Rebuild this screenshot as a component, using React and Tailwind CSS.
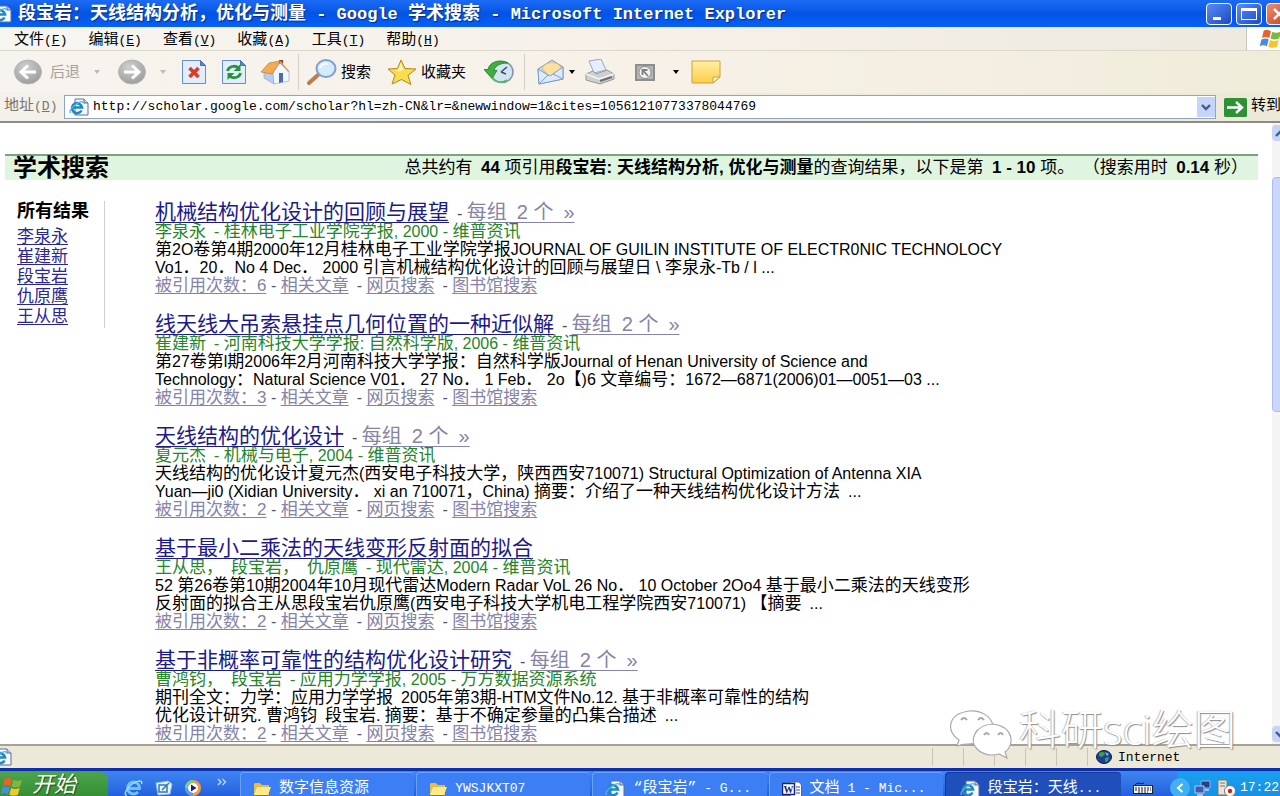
const results = [
  {
    title: "机械结构优化设计的回顾与展望",
    group: true,
    source: "李泉永\u2002- 桂林电子工业学院学报, 2000 - 维普资讯",
    lines: [
      "第2O卷第4期2000年12月桂林电子工业学院学报JOURNAL OF GUILIN INSTITUTE OF ELECTR0NIC TECHNOLOCY",
      "Vo1．20．No 4 Dec． 2000 引言机械结构优化设计的回顾与展望日 \\ 李泉永-Tb / l ...",
    ],
    cited: 6,
  },
  {
    title: "线天线大吊索悬挂点几何位置的一种近似解",
    group: true,
    source: "崔建新\u2002- 河南科技大学学报: 自然科学版, 2006 - 维普资讯",
    lines: [
      "第27卷第l期2006年2月河南科技大学学报：自然科学版Journal of Henan University of Science and",
      "Technology：Natural Science V01． 27 No． 1 Feb． 2o【)6 文章编号：1672—6871(2006)01—0051—03 ...",
    ],
    cited: 3,
  },
  {
    title: "天线结构的优化设计",
    group: true,
    source: "夏元杰\u2002- 机械与电子, 2004 - 维普资讯",
    lines: [
      "天线结构的优化设计夏元杰(西安电子科技大学，陕西西安710071) Structural Optimization of Antenna XIA",
      "Yuan—ji0 (Xidian University． xi an 710071，China) 摘要：介绍了一种天线结构优化设计方法\u2002...",
    ],
    cited: 2,
  },
  {
    title: "基于最小二乘法的天线变形反射面的拟合",
    group: false,
    source: "王从思，\u2002段宝岩，\u2002仇原鹰\u2002- 现代雷达, 2004 - 维普资讯",
    lines: [
      "52 第26卷第10期2004年10月现代雷达Modern Radar VoL 26 No． 10 October 2Oo4 基于最小二乘法的天线变形",
      "反射面的拟合王从思段宝岩仇原鹰(西安电子科技大学机电工程学院西安710071) 【摘要\u2002...",
    ],
    cited: 2,
  },
  {
    title: "基于非概率可靠性的结构优化设计研究",
    group: true,
    source: "曹鸿钧，\u2002段宝岩\u2002- 应用力学学报, 2005 - 万方数据资源系统",
    lines: [
      "期刊全文：力学：应用力学学报\u20022005年第3期-HTM文件No.12. 基于非概率可靠性的结构",
      "优化设计研究. 曹鸿钧\u2002段宝岩. 摘要：基于不确定参量的凸集合描述\u2002...",
    ],
    cited: 2,
  },
];

const authors = ["李泉永", "崔建新", "段宝岩", "仇原鹰", "王从思"];

const menus = [
  ["文件", "F"],
  ["编辑", "E"],
  ["查看", "V"],
  ["收藏", "A"],
  ["工具", "T"],
  ["帮助", "H"],
];

// Latin runs are set one size below the Chinese text around them
const Mixed = ({ text }) =>
  text.split(/([\x20-\x7e\u2002—]+)/).map((part, i) =>
    i % 2 ? <span key={i} className="text-base leading-none">{part}</span> : part
  );

/* ---------- icons ---------- */

const IePage = ({ className }) => (
  <svg viewBox="0 0 20 18" className={className} aria-hidden="true">
    <path d="M6 1h9l4 4v12H6z" fill="#f4f8ff" stroke="#5a6f9c" />
    <path d="M15 1v4h4" fill="#bcd0f2" stroke="#5a6f9c" />
    <path d="M12.500 12.500A5 5 0 1 1 13 9.500H4" fill="none" stroke="#2288c4" strokeWidth="2.600" />
    <path d="M2 14C-1 16 2 9 8 5.500C12 3 15 3 14 5.500" fill="none" stroke="#5ab4e0" strokeWidth="1.200" />
  </svg>
);

const IeLogo = ({ className }) => (
  <svg viewBox="0 0 20 18" className={className} aria-hidden="true">
    <path d="M14 13A6 6 0 1 1 15.500 9.500H5" fill="none" stroke="#6cc4fa" strokeWidth="2.800" />
    <path d="M3 16C-1 17 2 9 9 4.500C14 1 19 1 17.500 5" fill="none" stroke="#a5def9" strokeWidth="1.400" />
  </svg>
);

const WindowsFlag = ({ className }) => (
  <svg viewBox="0 0 26 22" className={className} aria-hidden="true">
    <path d="M5 2C8 0 10 1 13 2.500L11 10C8 8.500 6 8.500 3 10z" fill="#e8622c" />
    <path d="M14.500 3C17 4.500 20 4.500 24 3L22 10.500C18 12 15.500 12 12.500 10.500z" fill="#7cb93c" />
    <path d="M2.500 11.500C6 10 8 10 10.500 11.500L8.500 19C6 17.500 3 17.500 .5 19z" fill="#4a8ddd" />
    <path d="M12 12C15 13.500 18 13.500 21.500 12L19.500 19.500C16 21 13 21 10 19.500z" fill="#f5c62c" />
  </svg>
);

const RoundArrow = ({ flip }) => (
  <svg viewBox="0 0 28 26" className="h-[26px] w-7" aria-hidden="true">
    <defs>
      <radialGradient id="grayBall" cx=".4" cy=".3" r=".8">
        <stop offset="0" stopColor="#d0d0d0" />
        <stop offset="1" stopColor="#979797" />
      </radialGradient>
    </defs>
    <ellipse cx="14" cy="13" rx="13.500" ry="12" fill="url(#grayBall)" stroke="#b4b4b4" />
    <path
      d={flip ? "M6 13h14M14 6.500l7 6.500l-7 6.500" : "M22 13H8M14 6.500L7 13l7 6.500"}
      fill="none"
      stroke="#fff"
      strokeWidth="3"
    />
  </svg>
);

const Sheet = ({ children }) => (
  <svg viewBox="0 0 24 24" className="h-6 w-6" aria-hidden="true">
    <path d="M.5.5h18l5 5v18H.5z" fill="#e2edff" stroke="#6a8cc8" />
    <path d="M18.500.5v5h5z" fill="#5f84c8" stroke="#4a70b4" />
    {children}
  </svg>
);

const Home = () => (
  <svg viewBox="0 0 30 26" className="h-[26px] w-[30px]" aria-hidden="true">
    <path d="M19 1h4v7h-4z" fill="#9c3a22" />
    <path d="M4 13l10 1v11L4 19z" fill="#b9cdec" stroke="#8aa0c8" strokeWidth=".6" />
    <path d="M13 14l7-10l9 9v9l-15 3z" fill="#f3f7ff" stroke="#8aa0c8" strokeWidth=".6" />
    <path d="M1 13L9 4l11-2L12 15z" fill="#f5ab50" stroke="#c87830" strokeWidth=".7" />
    <path d="M20 2.500l9 10.500" stroke="#d9a06c" strokeWidth="1.600" />
    <path d="M19 14h4v9l-4 1z" fill="#4c6cb0" />
  </svg>
);

const Magnifier = () => (
  <svg viewBox="0 0 30 26" className="h-[26px] w-[30px]" aria-hidden="true">
    <path d="M2 24l9-8" stroke="#c07a50" strokeWidth="4" strokeLinecap="round" />
    <ellipse cx="19" cy="9.500" rx="9.500" ry="8.500" fill="#d3ecfa" stroke="#7f9fce" strokeWidth="2" />
    <path d="M13 9c1-4 5-5 8-4" stroke="#fff" strokeWidth="2" fill="none" />
  </svg>
);

const Star = () => (
  <svg viewBox="0 0 30 26" className="h-[26px] w-[30px]" aria-hidden="true">
    <path d="M14 1l4 8.500l11 .5l-8 6.500l3 9l-9.500-5L5 25l3-9L1 10l9.500-.5z" fill="#fbdc4e" stroke="#b08428" />
    <path d="M14 4l2.500 7L10 13z" fill="#fff6b8" />
  </svg>
);

const History = () => (
  <svg viewBox="0 0 30 24" className="h-6 w-[30px]" aria-hidden="true">
    <ellipse cx="18" cy="12" rx="11" ry="10.500" fill="#d2e6f2" stroke="#8095a8" strokeWidth="1.500" />
    <path d="M17 12l6-5M17 12l5 2" stroke="#3a5070" strokeWidth="1.600" />
    <path d="M24 3C14-2 5 3 4 9.500H0l8 9l5-8H10C11 6 16 3 24 3z" fill="#3fae3f" stroke="#267a2a" strokeWidth=".8" />
    <path d="M8 18c4 5 11 5 15 2" stroke="#5ab85a" strokeWidth="1.600" fill="none" />
  </svg>
);

const Mail = () => (
  <svg viewBox="0 0 28 26" className="h-[26px] w-7" aria-hidden="true">
    <path d="M1 10L15 1l11 7v12L2 25z" fill="#c8dcf6" stroke="#7a9cc8" />
    <path d="M5 9c3-6 14-8 19-1l-2 6l-10 4z" fill="#fbe0a0" stroke="#d8b060" strokeWidth=".7" />
    <path d="M1 10l12 7l13-9v12L2 25z" fill="#dcebfc" stroke="#7a9cc8" />
    <path d="M2 25l9-9M26 20l-10-5" stroke="#7a9cc8" />
  </svg>
);

const Printer = () => (
  <svg viewBox="0 0 30 26" className="h-[26px] w-[30px]" aria-hidden="true">
    <path d="M4 2l12-2l5 11l-12 3z" fill="#e4eefc" stroke="#93a8cc" />
    <path d="M1 15l7-3l3 3l11-4l7 4v5l-14 5L1 21z" fill="#cfcfcf" stroke="#989898" />
    <path d="M1 15l13 5l15-5" fill="none" stroke="#f4f4f4" strokeWidth="1.500" />
    <path d="M15 22l12-4" stroke="#6c6c6c" strokeWidth="2" />
  </svg>
);

const EditBox = () => (
  <svg viewBox="0 0 20 17" className="h-[17px] w-5" aria-hidden="true">
    <path d="M1 1h18v15H1z" fill="#b4b4b4" stroke="#8e8e8e" strokeWidth="2" />
    <circle cx="10" cy="8.500" r="6" fill="#f2f2f2" stroke="#8e8e8e" />
    <path d="M13 12L8 6.500M7.500 11v-5h5" stroke="#808080" strokeWidth="1.800" fill="none" />
  </svg>
);

const Note = () => (
  <svg viewBox="0 0 30 24" className="h-6 w-[30px]" aria-hidden="true">
    <defs>
      <linearGradient id="noteFill" x1="0" y1="0" x2="0" y2="1">
        <stop offset="0" stopColor="#fff0a0" />
        <stop offset="1" stopColor="#fbcf48" />
      </linearGradient>
    </defs>
    <path d="M1 1h28v16l-7 6H1z" fill="url(#noteFill)" stroke="#cfa040" />
    <path d="M29 17h-7v6z" fill="#fff4c0" stroke="#cfa040" />
  </svg>
);

const Caret = ({ className }) => (
  <svg viewBox="0 0 6 4" className={`h-1 w-1.5 ${className}`} aria-hidden="true">
    <path d="M0 0h6L3 4z" fill="currentColor" />
  </svg>
);

const Chevron = ({ className, up }) => (
  <svg viewBox="0 0 10 7" className={className} aria-hidden="true">
    <path d={up ? "M1 6l4-4l4 4" : "M1 1l4 4l4-4"} fill="none" stroke="#45598c" strokeWidth="2.400" />
  </svg>
);

const Folder = () => (
  <svg viewBox="0 0 18 14" className="h-3.5 w-[18px] shrink-0" aria-hidden="true">
    <path d="M1 2l1-1h5l2 2h7v10H1z" fill="#e8bc44" />
    <path d="M4 5h14l-3 8H1z" fill="#fdeb8e" />
  </svg>
);

const WordDoc = () => (
  <svg viewBox="0 0 20 16" className="h-4 w-5 shrink-0" aria-hidden="true">
    <path d="M8 1h9l2.500 3v11.500H8z" fill="#fff" stroke="#666" />
    <path d="M14 6h4M14 9h4M14 12h4" stroke="#44a" />
    <rect x=".5" y="2.500" width="12" height="11" fill="#fff" stroke="#16246e" strokeWidth="1.500" />
    <text x="6.500" y="12" textAnchor="middle" fontSize="10" fontWeight="700" fontFamily="Liberation Serif, serif" fill="#16246e">W</text>
  </svg>
);

const Globe = () => (
  <svg viewBox="0 0 16 14" className="h-3.5 w-4" aria-hidden="true">
    <ellipse cx="8" cy="7" rx="7.500" ry="6.500" fill="#1c3f94" stroke="#0c1c40" />
    <path d="M3 3c3-2 6-1 6 1l-3 3l-3-1zM9 8l4-1l-1 4l-3 1z" fill="#3da04c" />
    <path d="M9 2l4 2l-2 2z" fill="#7cc4ee" />
  </svg>
);

/* ---------- browser chrome ---------- */

const TitleBar = () => (
  <header className="flex h-[27px] shrink-0 items-center bg-gradient-to-b from-[#1c6bf5] via-[#0454e4] to-[#0560fa] whitespace-nowrap text-white">
    <IePage className="-ml-2 h-[18px] w-5 shrink-0" />
    <h1 className="ml-1.5 pt-0.5 text-lg leading-6 font-bold [text-shadow:1px_1px_1px_#0a2a80]">
      段宝岩：天线结构分析，优化与测量
      <span className="text-[17px]"> - Google </span>
      学术搜索
      <span className="text-[17px]"> - Microsoft Internet Explorer</span>
    </h1>
    <div className="-mr-3 ml-auto flex gap-1">
      <button aria-label="最小化" className="flex h-[22px] w-[26px] items-end rounded border border-white bg-gradient-to-br from-[#5a8cf5] to-[#1b48c4] p-1 pl-1.5">
        <span className="h-[3px] w-2 bg-white" />
      </button>
      <button aria-label="最大化" className="h-[22px] w-[26px] rounded border border-white bg-gradient-to-br from-[#5a8cf5] to-[#1b48c4] p-1">
        <span className="block h-3 w-4 border border-t-[3px] border-white" />
      </button>
      <button aria-label="关闭" className="flex h-[22px] w-[26px] items-center rounded border border-white bg-gradient-to-br from-[#ee8c70] to-[#c8381a] pl-1.5">
        <svg viewBox="0 0 12 12" className="h-3 w-3"><path d="M1 1l10 10M11 1L1 11" stroke="#fff" strokeWidth="2.500" /></svg>
      </button>
    </div>
  </header>
);

const MenuBar = () => (
  <nav className="flex h-6 shrink-0 items-center gap-[21px] border-b border-[#dcd8cc] bg-gradient-to-r from-[#f6f5f0] via-[#f7f0e9] to-[#ece9df] pl-3.5">
    {menus.map(([name, key]) => (
      <button key={key} className="pt-1 text-[15px] leading-5 whitespace-nowrap">
        {name}
        <span className="text-[13px]">(<u>{key}</u>)</span>
      </button>
    ))}
    <div className="ml-auto flex h-full w-[34px] items-center overflow-hidden border-l border-[#c8c4b8] bg-white pl-3">
      <WindowsFlag className="h-5 w-6 shrink-0" />
    </div>
  </nav>
);

const Toolbar = () => (
  <div className="flex h-[42px] shrink-0 items-center bg-gradient-to-r from-[#f6f4ef] via-[#f7f1e8] to-[#f0ecda] pl-3.5 text-[15px] whitespace-nowrap">
    <button className="flex items-center gap-2 text-[#a5a39b]">
      <RoundArrow />
      <span className="pt-1">后退</span>
    </button>
    <Caret className="ml-3.5 text-[#bdbab0]" />
    <button aria-label="前进" className="ml-[18px]"><RoundArrow flip /></button>
    <Caret className="ml-3.5 text-[#bdbab0]" />
    <button aria-label="停止" className="ml-4">
      <Sheet>
        <path d="M7.500 8l9 9M16.500 8l-9 9" stroke="#dc3c20" strokeWidth="3.600" />
      </Sheet>
    </button>
    <button aria-label="刷新" className="ml-4">
      <Sheet>
        <path d="M5.500 11c1-5 8-6 11-3M18.500 13c-1 5-8 6-11 3" fill="none" stroke="#23963a" strokeWidth="2.800" />
        <path d="M18.500 4v7h-7zM5.500 20v-7h7z" fill="#23963a" />
      </Sheet>
    </button>
    <button aria-label="主页" className="ml-3.5"><Home /></button>
    <span className="mx-2 h-9 w-px bg-[#d2cec2]" />
    <button className="flex items-center gap-1"><Magnifier /><span className="pt-1">搜索</span></button>
    <button className="ml-4 flex items-center gap-1"><Star /><span className="pt-1">收藏夹</span></button>
    <button aria-label="历史" className="ml-[18px]"><History /></button>
    <span className="mr-2 ml-2.5 h-9 w-px bg-[#d2cec2]" />
    <button aria-label="邮件" className="ml-1 flex items-center gap-1"><Mail /><Caret className="text-black" /></button>
    <button aria-label="打印" className="ml-2.5"><Printer /></button>
    <button aria-label="编辑" className="ml-5 flex items-center gap-[18px]"><EditBox /><Caret className="text-black" /></button>
    <button aria-label="讨论" className="ml-3"><Note /></button>
  </div>
);

const AddressBar = () => (
  <div className="flex h-[30px] shrink-0 items-center border-b-2 border-[#8e8c84] bg-gradient-to-r from-[#f3f1ea] to-[#ece9d8] pl-1 whitespace-nowrap">
    <label htmlFor="address" className="w-[60px] shrink-0 text-[15px] leading-5 text-[#77756e]">
      地址<span className="text-[13px]">(<u>D</u>)</span>
    </label>
    <div className="flex h-6 min-w-0 flex-1 items-center border border-[#8fa6c0] bg-white pl-1">
      <IePage className="h-[18px] w-5 shrink-0" />
      <input
        id="address"
        type="text"
        defaultValue="http://scholar.google.com/scholar?hl=zh-CN&lr=&newwindow=1&cites=10561210773378044769"
        className="ml-1 min-w-0 flex-1 bg-transparent text-[13px] leading-5 outline-none"
      />
      <button aria-label="历史地址" className="flex h-5 w-[18px] items-center justify-center bg-[#c6d4fa]">
        <Chevron className="h-[7px] w-2.5" />
      </button>
    </div>
    <button className="ml-2 flex w-14 shrink-0 items-center gap-1 text-[15px] leading-5">
      <svg viewBox="0 0 23 19" className="h-[19px] w-[23px] shrink-0">
        <rect width="23" height="19" rx="1.500" fill="#2c9234" />
        <path d="M3 9.500h15M12 4l6 5.500l-6 5.500" fill="none" stroke="#fff" strokeWidth="2.400" />
      </svg>
      转到
    </button>
  </div>
);

/* ---------- page ---------- */

const Result = ({ item }) => (
  <article className="whitespace-nowrap">
    <h3 className="text-[21px] leading-[22px] text-[#4a4a6a]">
      <a href="#" className="text-[#1c1a86] underline decoration-1 underline-offset-3">{item.title}</a>
      {item.group && (
        <>
          <Mixed text={"\u2002- "} />
          <a href="#" className="text-xl leading-none text-[#8583a6] underline decoration-1 underline-offset-3">{"每组\u20022 个\u2002»"}</a>
        </>
      )}
    </h3>
    <p className="text-[#258529]"><Mixed text={item.source} /></p>
    {item.lines.map((line) => (
      <p key={line}><Mixed text={line} /></p>
    ))}
    <p className="text-[#55536e]">
      <a href="#" className="text-[#8583a6] underline underline-offset-2">被引用次数：{item.cited}</a>
      <Mixed text=" - " />
      <a href="#" className="text-[#8583a6] underline underline-offset-2">相关文章</a>
      <Mixed text={"\u2002- "} />
      <a href="#" className="text-[#8583a6] underline underline-offset-2">网页搜索</a>
      <Mixed text={"\u2002- "} />
      <a href="#" className="text-[#8583a6] underline underline-offset-2">图书馆搜索</a>
    </p>
  </article>
);

const Page = () => (
  <main className="min-w-0 flex-1 overflow-hidden pt-[31px] pr-3.5 pl-[5px] font-['Liberation_Sans','Noto_Sans_CJK_SC',sans-serif] text-[17px] leading-[18px]">
    <div className="flex h-[26px] items-center justify-between border-t-2 border-[#7da27d] bg-[#dff5e0] pr-2.5 pl-2 whitespace-nowrap">
      <h2 className="text-2xl leading-6 font-bold">学术搜索</h2>
      <p>
        总共约有{"\u2002"}<b>44</b> 项引用<b>段宝岩: 天线结构分析, 优化与测量</b>的查询结果，以下是第{"\u2002"}
        <b>1 - 10</b> 项。{"\u2002"}（搜索用时{"\u2002"}<b>0.14</b> 秒）
      </p>
    </div>
    <div className="flex pt-[21px]">
      <aside className="h-[127px] w-[100px] shrink-0 border-r border-[#cfcfcf] pl-3">
        <h3 className="mb-1.5 text-lg leading-5 font-bold">所有结果</h3>
        <ul>
          {authors.map((name) => (
            <li key={name} className="leading-5">
              <a href="#" className="text-[#2a2890] underline underline-offset-2">{name}</a>
            </li>
          ))}
        </ul>
      </aside>
      <section className="flex flex-col gap-[18px] pl-[50px]">
        {results.map((item) => (
          <Result key={item.title} item={item} />
        ))}
      </section>
    </div>
  </main>
);

const ScrollBar = () => (
  <div className="flex w-2 shrink-0 flex-col overflow-hidden bg-[#f6f4f2] py-0.5">
    <button aria-label="向上滚动" className="flex h-4 w-4 items-center justify-center rounded-sm bg-[#c6d4fa]">
      <Chevron up className="h-[7px] w-2.5" />
    </button>
    <div className="mt-9 h-[235px] w-4 rounded-sm border border-[#a9bdf0] bg-[#cad6fb]" />
    <button aria-label="向下滚动" className="mt-auto flex h-4 w-4 items-center justify-center rounded-sm bg-[#c6d4fa]">
      <Chevron className="h-[7px] w-2.5" />
    </button>
  </div>
);

const StatusBar = () => (
  <footer className="flex h-6 shrink-0 items-center border-t-2 border-[#a5a298] bg-[#ece9d8]">
    <IePage className="-ml-2 h-[18px] w-5" />
    <div className="ml-auto flex h-[18px]">
      {[0, 1, 2, 3, 4].map((n) => (
        <span key={n} className="w-[31px] border-l border-[#c9c5b2]" />
      ))}
    </div>
    <div className="flex h-[18px] w-[193px] items-center gap-1.5 border-l border-[#c9c5b2] pl-2 text-[13px] leading-4">
      <Globe />
      <span className="pt-0.5">Internet</span>
    </div>
  </footer>
);

const Task = ({ icon, active, children }) => (
  <button
    className={`flex h-8 min-w-0 flex-1 items-center gap-2 rounded-t-sm border-t border-l pr-2 text-[15px] leading-5 whitespace-nowrap ${
      active ? "border-[#123a9c] bg-[#1e4fbb] pl-3.5" : "border-[#6aa2fb] bg-[#3c7ff5] pl-3"
    }`}
  >
    {icon}
    <span className="truncate">{children}</span>
  </button>
);

const TaskBar = () => (
  <div className="flex h-7 shrink-0 items-start overflow-hidden border-t-[3px] border-[#0c2fae] bg-gradient-to-b from-[#3f86f2] to-[#2360dc] pt-px text-white">
    <button className="flex h-[30px] w-[108px] shrink-0 items-center gap-2 rounded-r-lg bg-gradient-to-b from-[#4ca44a] to-[#2f8a30] text-[22px] leading-6 italic [text-shadow:1px_1px_1px_#1c4c1c]">
      <WindowsFlag className="h-5 w-6 shrink-0" />
      开始
    </button>
    <div className="flex h-8 w-[132px] shrink-0 items-center gap-[11px] pl-4">
      <IeLogo className="h-[18px] w-5" />
      <svg viewBox="0 0 18 16" className="h-4 w-[18px]">
        <path d="M1 3l12-2l4 3l-2 10l-12 1z" fill="#e4f2fb" stroke="#8cc0e4" />
        <path d="M4 5h8v7H4zM7 10l7-7" fill="none" stroke="#3478b4" strokeWidth="1.500" />
      </svg>
      <svg viewBox="0 0 18 18" className="h-[18px] w-[18px]">
        <circle cx="9" cy="9" r="6.500" fill="#fff" stroke="#f09a4c" strokeWidth="3" />
        <path d="M2.500 9A6.500 6.500 0 0 1 9 2.500" fill="none" stroke="#7ad07a" strokeWidth="3" />
        <path d="M9 15.500A6.500 6.500 0 0 1 2.500 9" fill="none" stroke="#5a9cf0" strokeWidth="3" />
        <path d="M7 5.500L12.500 9L7 12.500z" fill="#16246e" />
      </svg>
      <svg viewBox="0 0 10 8" className="mb-3 ml-1 h-2 w-2.5">
        <path d="M1 1l3 3l-3 3M5.500 1l3 3l-3 3" fill="none" stroke="#b4d2fc" strokeWidth="1.500" />
      </svg>
    </div>
    <div className="flex min-w-0 flex-1 gap-0.5">
      <Task icon={<Folder />}>数字信息资源</Task>
      <Task icon={<Folder />}><span className="text-[13px]">YWSJKXT07</span></Task>
      <Task icon={<IePage className="h-[18px] w-5 shrink-0" />}>“段宝岩”<span className="text-[13px]"> - G...</span></Task>
      <Task icon={<WordDoc />}>文档<span className="text-[13px]"> 1 - Mic...</span></Task>
      <Task active icon={<IePage className="h-[18px] w-5 shrink-0" />}>段宝岩：天线<span className="text-[13px]">...</span></Task>
    </div>
    <div className="flex h-8 w-[57px] shrink-0 items-center pl-3">
      <svg viewBox="0 0 20 12" className="h-3 w-5">
        <path d="M2 3c3-4 5 0 9-2" stroke="#111" fill="none" />
        <rect x=".5" y="3.500" width="19" height="8" fill="#f4f4f4" stroke="#222" />
        <path d="M2 6h16M2 8h16M5 10h10" stroke="#222" strokeDasharray="2 1" />
      </svg>
    </div>
    <div className="flex h-8 w-[102px] shrink-0 items-center gap-1 bg-gradient-to-b from-[#1aa0f0] to-[#128ae4] text-[13px] leading-4">
      <button aria-label="显示隐藏图标" className="-ml-2 flex h-5 w-5 shrink-0 items-center justify-center rounded-full bg-[#3fb0f4]">
        <svg viewBox="0 0 8 10" className="h-2.5 w-2"><path d="M6.500 1L2 5l4.500 4" fill="none" stroke="#fff" strokeWidth="2" /></svg>
      </button>
      <svg viewBox="0 0 18 16" className="h-4 w-[18px] shrink-0">
        <path d="M7 1h9v7H7z" fill="#24408c" stroke="#9ab4dc" />
        <path d="M1 6h9v7H1z" fill="#3a5cb4" stroke="#b8cbe8" />
        <path d="M3 15h6M11 10h4" stroke="#dcd" strokeWidth="1.500" />
      </svg>
      <svg viewBox="0 0 20 18" className="h-[18px] w-5 shrink-0">
        <path d="M2 1h9v15H2z" fill="#e8e4d8" stroke="#77756c" />
        <path d="M4 4h5M4 7h5" stroke="#77756c" />
        <circle cx="14" cy="12" r="5.500" fill="#fff" stroke="#777" />
        <circle cx="14" cy="12" r="2.200" fill="#cc2222" />
      </svg>
      <time>17:22</time>
    </div>
  </div>
);

const Watermark = () => (
  <div className="pointer-events-none absolute right-11 bottom-9 flex items-start gap-1.5 whitespace-nowrap text-white">
    <svg viewBox="0 0 64 50" className="h-[50px] w-16" fill="#fff" stroke="#a9a9a9" strokeWidth="1.200">
      <path d="M8 36l2-6C-3 22-2 4 20 1C34 0 43 8 44 16C30 20 24 26 25 33C20 35 16 33 8 36z" />
      <path d="M58 48l-2-6C66 35 65 17 44 14C25 15 20 31 28 39C34 45 42 46 50 44z" />
      <path d="M12 10q3-4 6 0M29 10q3-4 6 0M35 25q3-4 5 0M49 25q3-4 5 0" fill="none" strokeWidth="2" />
    </svg>
    <span className="font-['Open_Sans','Noto_Sans_CJK_SC',sans-serif] text-[42px] leading-[38px] font-light [text-shadow:1px_1px_1px_#8c8c8c,-1px_0_1px_#bdbdbd]">科研sci绘图</span>
  </div>
);

export default function App() {
  return (
    <div className="relative flex h-screen flex-col overflow-hidden bg-white font-['Liberation_Mono','Noto_Sans_CJK_SC',monospace] text-black">
      <TitleBar />
      <MenuBar />
      <Toolbar />
      <AddressBar />
      <div className="flex min-h-0 flex-1">
        <Page />
        <ScrollBar />
      </div>
      <StatusBar />
      <TaskBar />
      <Watermark />
    </div>
  );
}
